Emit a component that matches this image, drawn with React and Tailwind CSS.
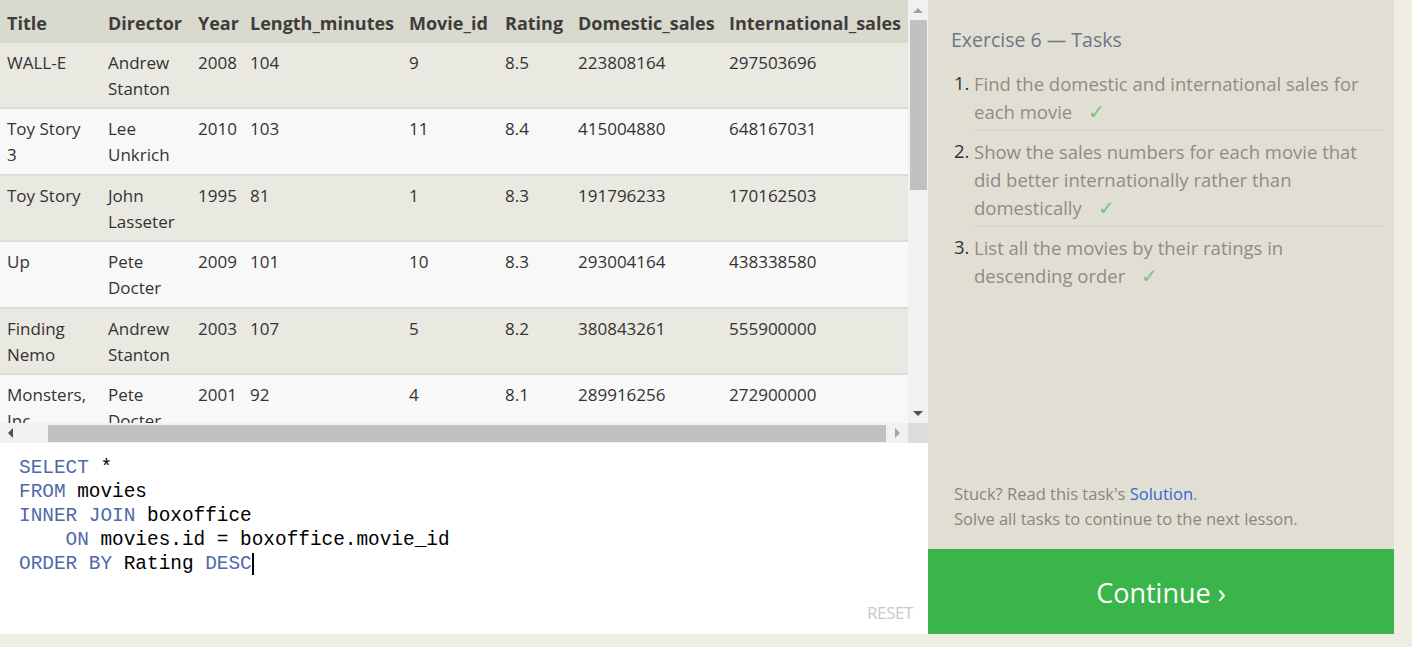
import React from 'react';

const columns = [
  { key: 'title', label: 'Title', w: 'w-[101px]' },
  { key: 'director', label: 'Director', w: 'w-[90px]' },
  { key: 'year', label: 'Year', w: 'w-[52px]' },
  { key: 'length', label: 'Length_minutes', w: 'w-[159px]' },
  { key: 'id', label: 'Movie_id', w: 'w-[96px]' },
  { key: 'rating', label: 'Rating', w: 'w-[73px]' },
  { key: 'domestic', label: 'Domestic_sales', w: 'w-[151px]' },
  { key: 'intl', label: 'International_sales', w: 'w-[200px]' },
];

const movies = [
  ['WALL-E', 'Andrew Stanton', 2008, 104, 9, 8.5, 223808164, 297503696],
  ['Toy Story 3', 'Lee Unkrich', 2010, 103, 11, 8.4, 415004880, 648167031],
  ['Toy Story', 'John Lasseter', 1995, 81, 1, 8.3, 191796233, 170162503],
  ['Up', 'Pete Docter', 2009, 101, 10, 8.3, 293004164, 438338580],
  ['Finding Nemo', 'Andrew Stanton', 2003, 107, 5, 8.2, 380843261, 555900000],
  ['Monsters, Inc.', 'Pete Docter', 2001, 92, 4, 8.1, 289916256, 272900000],
  ['Ratatouille', 'Brad Bird', 2007, 115, 7, 8.0, 206445654, 417277164],
];

const Check = () => <span className="ml-[16px] text-[20px] leading-[28px] text-[#7cc47f]">✓</span>;

const tasks = [
  'Find the domestic and international sales for each movie',
  'Show the sales numbers for each movie that did better internationally rather than domestically',
  'List all the movies by their ratings in descending order',
];

const App = () => {
  return (
    <div className="flex h-[647px] w-[1412px] bg-[#efece4] font-['Open_Sans',sans-serif] overflow-hidden">
      {/* Left: results + editor */}
      <div className="flex w-[928px] h-[634px] flex-col">
        <div className="flex h-[443px] flex-col border-b border-[#e2e0d8]">
          <div className="flex h-[423px]">
            <div className="flex-1 overflow-hidden bg-[#f8f8f8]">
              <table className="w-[922px] table-fixed border-collapse text-left text-[17px] leading-[26px] text-[#333]">
                <thead>
                  <tr className="bg-[#dad9cd]">
                    {columns.map((c) => (
                      <th key={c.key} className={`${c.w} pl-[7px] pr-[2px] pt-[10px] pb-[7px] font-bold text-[18px] text-[#3d3d3d] whitespace-nowrap`}>
                        {c.label}
                      </th>
                    ))}
                  </tr>
                </thead>
                <tbody>
                  {movies.map((m, i) => (
                    <tr
                      key={m[0]}
                      className={i % 2 === 0 ? 'bg-[#e9e8e1] border-b-2 border-[#dedcd6]' : 'bg-[#f8f8f8] border-b-2 border-[#dedcd6]'}
                    >
                      {m.map((v, j) => (
                        <td key={j} className="pl-[7px] pr-[8px] pt-[7px] pb-[5.4px] align-top">
                          {typeof v === 'number' && j === 5 ? v.toFixed(1) : v}
                        </td>
                      ))}
                    </tr>
                  ))}
                </tbody>
              </table>
            </div>
            {/* vertical scrollbar */}
            <div className="flex w-[20px] flex-col items-center bg-[#f1f1f1]">
              <div className="flex h-[20px] items-center justify-center">
                <div className="h-0 w-0 border-x-[5px] border-b-[5px] border-x-transparent border-b-[#a3a3a3]" />
              </div>
              <div className="h-[170px] w-[17px] bg-[#c1c1c1]" />
              <div className="flex-1" />
              <div className="flex h-[20px] items-center justify-center">
                <div className="h-0 w-0 border-x-[5px] border-t-[5px] border-x-transparent border-t-[#505050]" />
              </div>
            </div>
          </div>
          {/* horizontal scrollbar */}
          <div className="flex h-[20px] items-center bg-[#f1f1f1]">
            <div className="flex w-[20px] items-center justify-center">
              <div className="h-0 w-0 border-y-[5px] border-r-[5px] border-y-transparent border-r-[#505050]" />
            </div>
            <div className="ml-[28px] h-[17px] w-[838px] bg-[#c1c1c1]" />
            <div className="flex-1 flex items-center justify-center">
              <div className="h-0 w-0 border-y-[5px] border-l-[5px] border-y-transparent border-l-[#a3a3a3]" />
            </div>
            <div className="h-[20px] w-[20px] bg-[#dcdcdc]" />
          </div>
        </div>

        {/* SQL editor */}
        <div className="relative flex-1 bg-white pl-[19px] pt-[13px] font-['Liberation_Mono',monospace] text-[19.4px] leading-[24px] text-black whitespace-pre">
          <div><span className="text-[#4e69a8]">SELECT</span> *</div>
          <div><span className="text-[#4e69a8]">FROM</span> movies</div>
          <div><span className="text-[#4e69a8]">INNER JOIN</span> boxoffice</div>
          <div>    <span className="text-[#4e69a8]">ON</span> movies.id = boxoffice.movie_id</div>
          <div className="flex items-center">
            <span><span className="text-[#4e69a8]">ORDER BY</span> Rating <span className="text-[#4e69a8]">DESC</span></span>
            <span className="inline-block h-[22px] w-[2px] bg-black" />
          </div>
          <div className="absolute bottom-[9px] right-[15px] font-['Open_Sans',sans-serif] text-[17px] text-[#c9c9c9] tracking-tight">RESET</div>
        </div>
      </div>

      {/* Right: tasks */}
      <div className="flex w-[466px] h-[634px] flex-col bg-[#e1dfd4]">
        <div className="flex-1 pl-[23px] pr-[10px] pt-[26px]">
          <h2 className="text-[19.5px] leading-[28px] text-[#6c7686]">Exercise 6 — Tasks</h2>
          <ol className="mt-[15px]">
            {tasks.map((t, i) => (
              <li key={t} className="flex text-[18.5px] leading-[28px]">
                <span className="w-[23px] shrink-0 pl-[3px] text-[#333]">{i + 1}.</span>
                <div className={`flex-1 pb-[4px] pt-[1px] ${i < tasks.length - 1 ? 'border-b border-[#d3d1c6] mb-[6px]' : ''}`}>
                  <div className="pr-[16px]">
                    <span className="text-[#8f8c84]">{t}</span>
                    <Check />
                  </div>
                </div>
              </li>
            ))}
          </ol>
        </div>
        <div className="pl-[26px] pb-[18px] text-[16.5px] leading-[25px] text-[#8c857b]">
          <div>
            Stuck? Read this task's <span className="text-[#3567d6]">Solution</span>.
          </div>
          <div>Solve all tasks to continue to the next lesson.</div>
        </div>
        <button className="flex h-[85px] items-center justify-center bg-[#3ab54a] pt-[3px] text-[27px] text-white">
          Continue ›
        </button>
      </div>
    </div>
  );
};

export default App;
